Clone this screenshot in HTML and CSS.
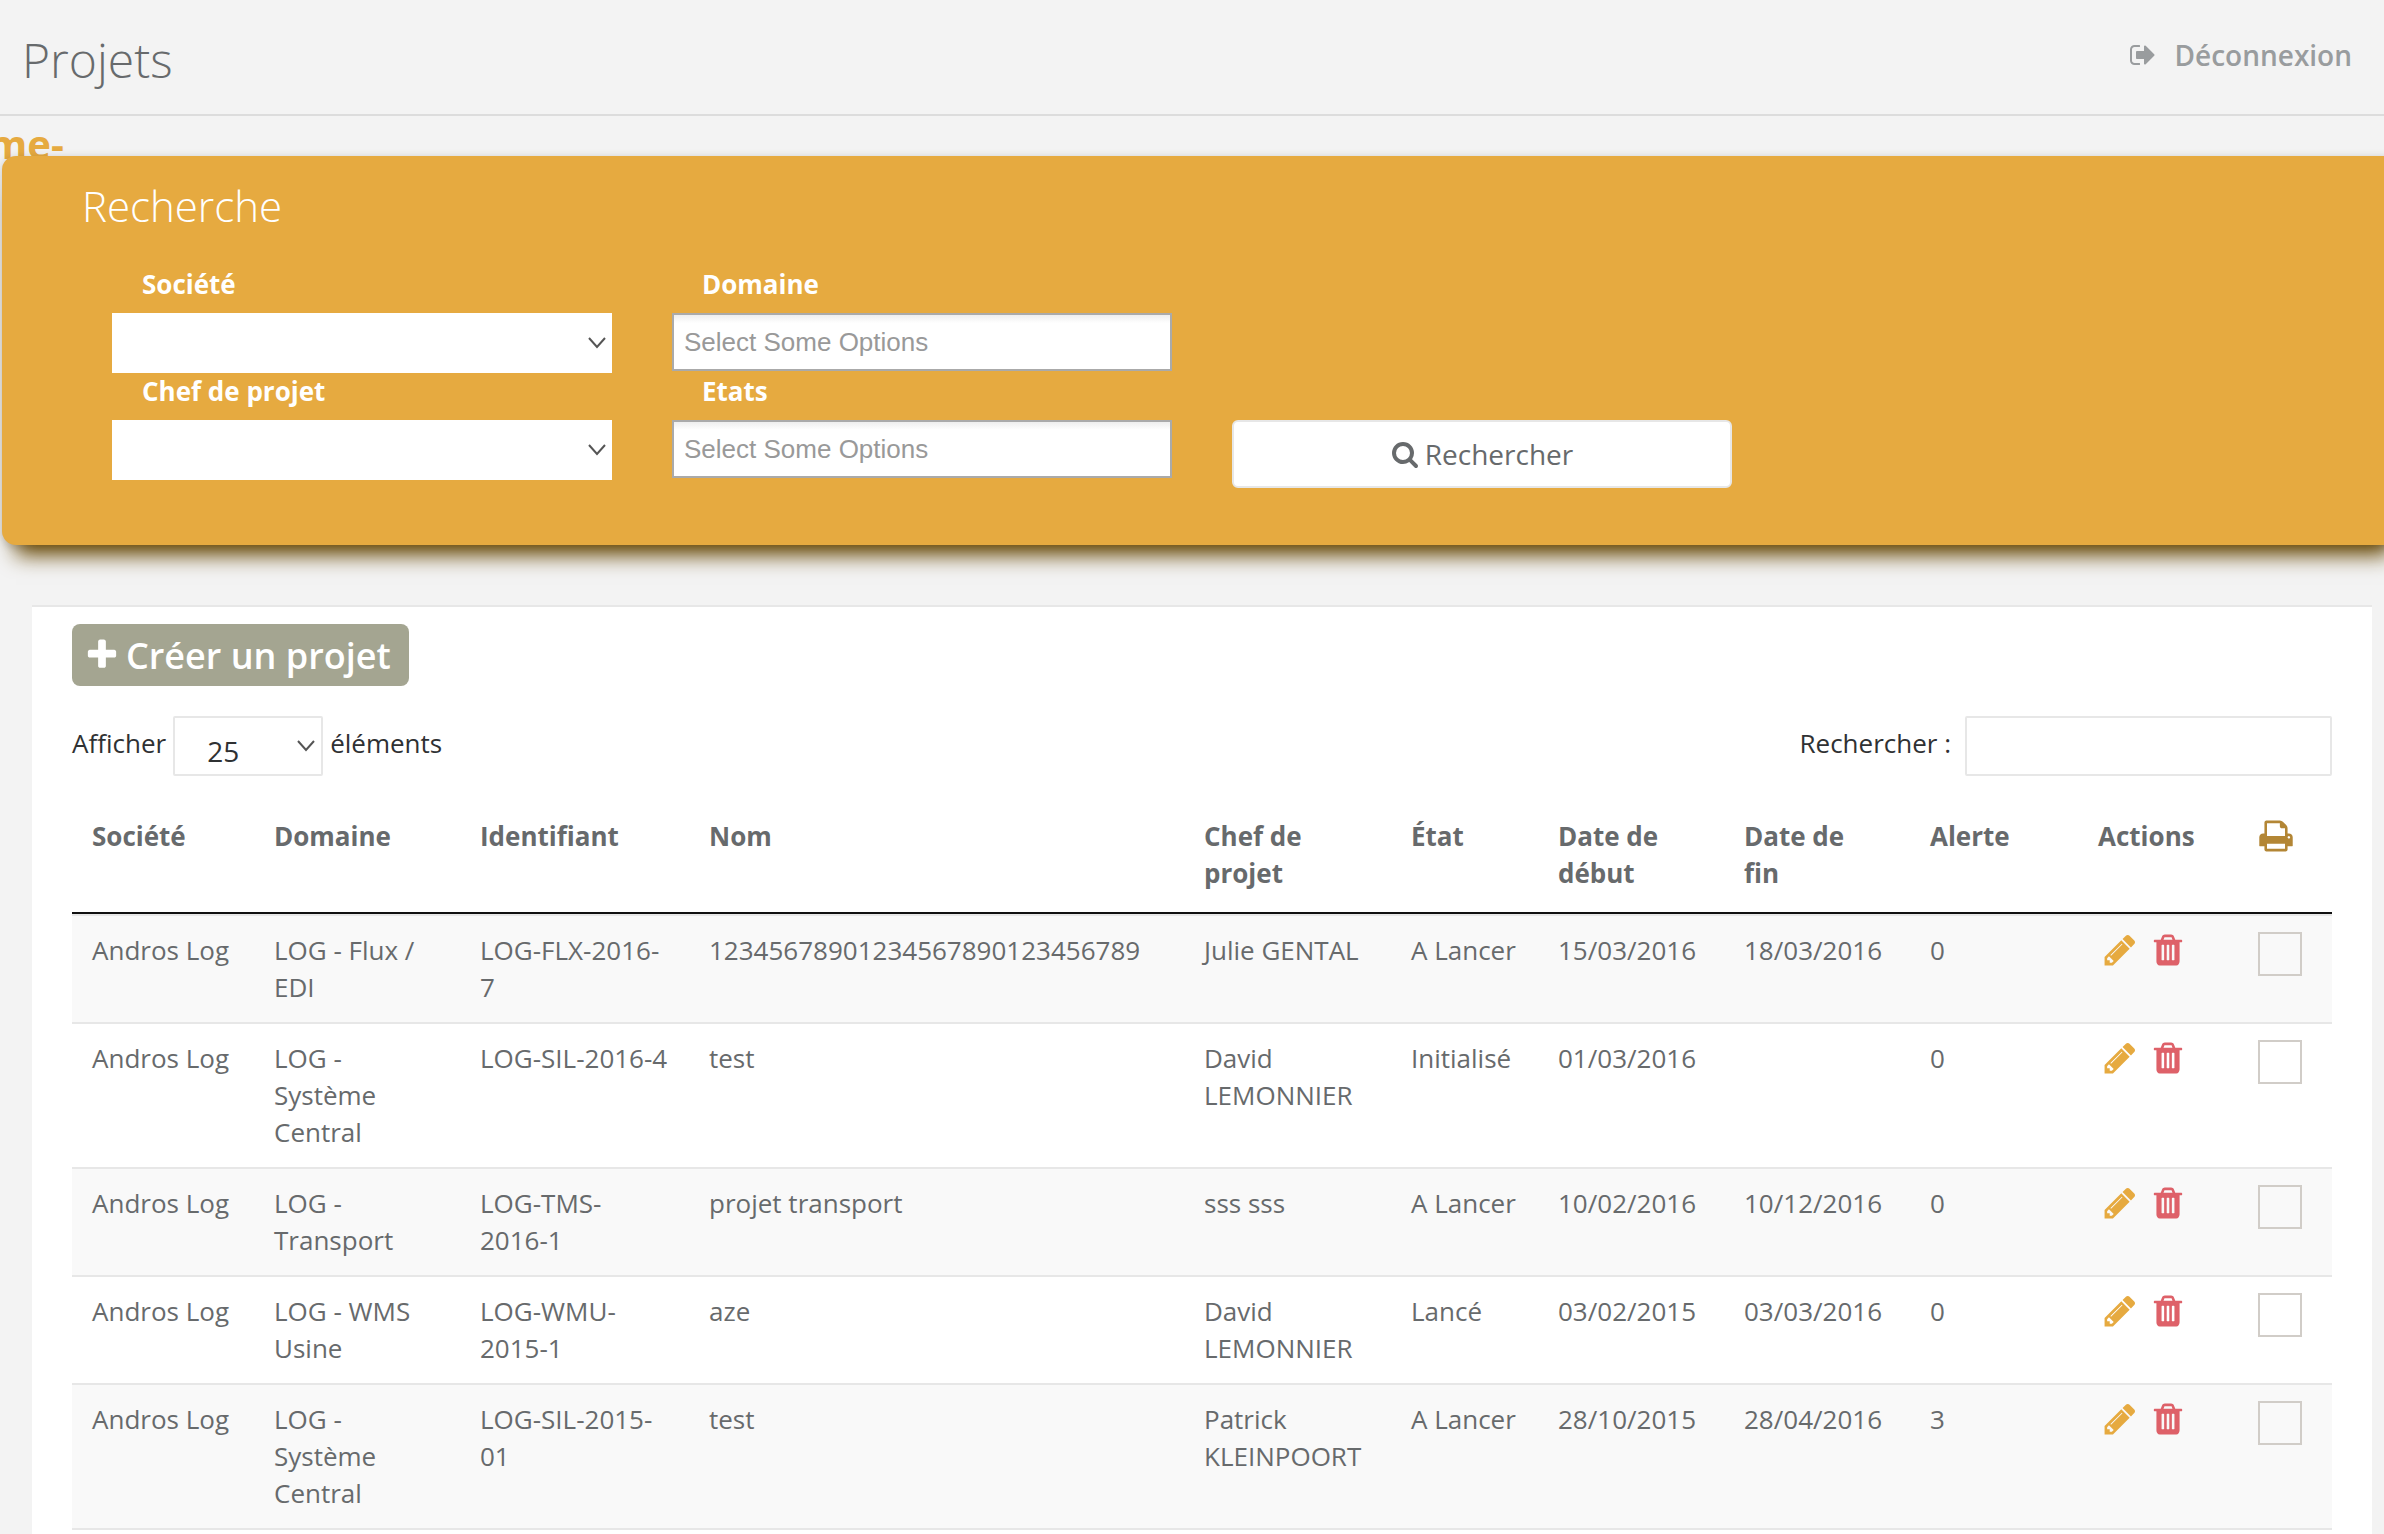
FILE: index.html
```html
<!DOCTYPE html>
<html lang="fr">
<head>
  <meta charset="UTF-8">
  <title>Projets</title>
  <meta name="viewport" content="width=device-width, initial-scale=1.0">
  <link rel="stylesheet" href="styles.css">
</head>
<body>
  <!-- Icônes -->
  <svg class="sprite" aria-hidden="true">
    <symbol id="i-sign-out" viewBox="0 0 1792 1792"><path d="M704 1440q0 4 1 20t.5 26.5-3 23.5-10 19.5-20.5 6.5h-320q-119 0-203.5-84.5t-84.5-203.5v-704q0-119 84.5-203.5t203.5-84.5h320q13 0 22.5 9.5t9.5 22.5q0 4 1 20t.5 26.5-3 23.5-10 19.5-20.5 6.5h-320q-66 0-113 47t-47 113v704q0 66 47 113t113 47h312l11.5 1 11.5 3 8 5.5 7 9 2 13.5zm928-544q0 26-19 45l-544 544q-19 19-45 19t-45-19-19-45v-288h-448q-26 0-45-19t-19-45v-384q0-26 19-45t45-19h448v-288q0-26 19-45t45-19 45 19l544 544q19 19 19 45z"/></symbol>
    <symbol id="i-search" viewBox="0 0 1792 1792"><path d="M1216 832q0-185-131.5-316.5t-316.5-131.5-316.5 131.5-131.5 316.5 131.5 316.5 316.5 131.5 316.5-131.5 131.5-316.5zm512 832q0 52-38 90t-90 38q-54 0-90-38l-343-342q-179 124-399 124-143 0-273.5-55.5t-225-150-150-225-55.5-273.5 55.5-273.5 150-225 225-150 273.5-55.5 273.5 55.5 225 150 150 225 55.5 273.5q0 220-124 399l343 343q37 37 37 90z"/></symbol>
    <symbol id="i-plus" viewBox="0 0 1792 1792"><path d="M1600 736v192q0 40-28 68t-68 28h-416v416q0 40-28 68t-68 28h-192q-40 0-68-28t-28-68v-416h-416q-40 0-68-28t-28-68v-192q0-40 28-68t68-28h416v-416q0-40 28-68t68-28h192q40 0 68 28t28 68v416h416q40 0 68 28t28 68z"/></symbol>
    <symbol id="i-print" viewBox="0 0 1792 1792"><path d="M448 1536h896v-256h-896v256zm0-640h896v-384h-160q-40 0-68-28t-28-68v-160h-640v640zm1152 64q0-26-19-45t-45-19-45 19-19 45 19 45 45 19 45-19 19-45zm128 0v416q0 13-9.5 22.5t-22.5 9.5h-224v160q0 40-28 68t-68 28h-960q-40 0-68-28t-28-68v-160h-224q-13 0-22.5-9.5t-9.5-22.5v-416q0-79 56.5-135.5t135.5-56.5h64v-544q0-40 28-68t68-28h672q40 0 88 20t76 48l152 152q28 28 48 76t20 88v256h64q79 0 135.5 56.5t56.5 135.5z"/></symbol>
    <symbol id="i-pencil" viewBox="0 0 1792 1792"><path d="M491 1536l91-91-235-235-91 91v107h128v128h107zm523-928q0-22-22-22-10 0-17 7l-542 542q-7 7-7 17 0 22 22 22 10 0 17-7l542-542q7-7 7-17zm-54-192l416 416-832 832h-416v-416zm683 96q0 53-37 90l-166 166-416-416 166-165q36-38 90-38 53 0 91 38l235 234q37 39 37 91z"/></symbol>
    <symbol id="i-trash" viewBox="0 0 1792 1792"><path d="M704 1376v-704q0-14-9-23t-23-9h-64q-14 0-23 9t-9 23v704q0 14 9 23t23 9h64q14 0 23-9t9-23zm256 0v-704q0-14-9-23t-23-9h-64q-14 0-23 9t-9 23v704q0 14 9 23t23 9h64q14 0 23-9t9-23zm256 0v-704q0-14-9-23t-23-9h-64q-14 0-23 9t-9 23v704q0 14 9 23t23 9h64q14 0 23-9t9-23zm-544-992h448l-48-117q-7-9-17-11h-317q-10 2-17 11zm928 32v64q0 14-9 23t-23 9h-96v948q0 83-47 143.5t-113 60.5h-832q-66 0-113-58.5t-47-141.5v-952h-96q-14 0-23-9t-9-23v-64q0-14 9-23t23-9h309l70-167q15-37 54-63t79-26h320q40 0 79 26t54 63l70 167h309q14 0 23 9t9 23z"/></symbol>
  </svg>

  <header class="page-header">
    <h1>Projets</h1>
    <a class="logout" href="#"><svg class="icon"><use href="#i-sign-out"/></svg>Déconnexion</a>
  </header>

  <div class="brand">me-</div>

  <section class="search-panel">
    <h2>Recherche</h2>
    <form class="search-form">
      <div class="field">
        <label for="societe">Société</label>
        <select id="societe"><option></option></select>
      </div>
      <div class="field">
        <label for="domaine">Domaine</label>
        <input type="text" id="domaine" placeholder="Select Some Options">
      </div>
      <div class="field new-row">
        <label for="chef">Chef de projet</label>
        <select id="chef"><option></option></select>
      </div>
      <div class="field">
        <label for="etats">Etats</label>
        <input type="text" id="etats" placeholder="Select Some Options">
      </div>
      <button type="button" class="btn-search"><svg class="icon"><use href="#i-search"/></svg>Rechercher</button>
    </form>
  </section>

  <main class="card">
    <a class="btn-create" href="#"><svg class="icon-lg"><use href="#i-plus"/></svg>Créer un projet</a>

    <div class="toolbar">
      <div class="length">
        <label for="length">Afficher</label>
        <select id="length">
          <option>10</option>
          <option selected>25</option>
          <option>50</option>
        </select>
        <span>éléments</span>
      </div>
      <div class="filter">
        <label for="filter">Rechercher :</label>
        <input type="search" id="filter">
      </div>
    </div>

    <table class="projects">
      <colgroup>
        <col class="c-societe">
        <col class="c-domaine">
        <col class="c-ident">
        <col>
        <col class="c-chef">
        <col class="c-etat">
        <col class="c-date">
        <col class="c-date">
        <col class="c-alerte">
        <col class="c-actions">
        <col class="c-print">
      </colgroup>
      <thead>
        <tr>
          <th>Société</th>
          <th>Domaine</th>
          <th>Identifiant</th>
          <th>Nom</th>
          <th>Chef de projet</th>
          <th>État</th>
          <th>Date de début</th>
          <th>Date de fin</th>
          <th>Alerte</th>
          <th>Actions</th>
          <th class="print"><a href="#" aria-label="Imprimer"><svg class="icon-lg"><use href="#i-print"/></svg></a></th>
        </tr>
      </thead>
      <tbody>
        <tr>
          <td>Andros Log</td>
          <td>LOG - Flux / EDI</td>
          <td>LOG-FLX-2016-7</td>
          <td>12345678901234567890123456789</td>
          <td>Julie GENTAL</td>
          <td>A Lancer</td>
          <td>15/03/2016</td>
          <td>18/03/2016</td>
          <td>0</td>
          <td>
            <div class="actions">
              <a class="edit" href="#" aria-label="Modifier"><svg class="icon-lg"><use href="#i-pencil"/></svg></a>
              <a class="delete" href="#" aria-label="Supprimer"><svg class="icon-lg"><use href="#i-trash"/></svg></a>
            </div>
          </td>
          <td><input type="checkbox" aria-label="Imprimer LOG-FLX-2016-7"></td>
        </tr>
        <tr>
          <td>Andros Log</td>
          <td>LOG - Système Central</td>
          <td>LOG-SIL-2016-4</td>
          <td>test</td>
          <td>David LEMONNIER</td>
          <td>Initialisé</td>
          <td>01/03/2016</td>
          <td></td>
          <td>0</td>
          <td>
            <div class="actions">
              <a class="edit" href="#" aria-label="Modifier"><svg class="icon-lg"><use href="#i-pencil"/></svg></a>
              <a class="delete" href="#" aria-label="Supprimer"><svg class="icon-lg"><use href="#i-trash"/></svg></a>
            </div>
          </td>
          <td><input type="checkbox" aria-label="Imprimer LOG-SIL-2016-4"></td>
        </tr>
        <tr>
          <td>Andros Log</td>
          <td>LOG - Transport</td>
          <td>LOG-TMS-2016-1</td>
          <td>projet transport</td>
          <td>sss sss</td>
          <td>A Lancer</td>
          <td>10/02/2016</td>
          <td>10/12/2016</td>
          <td>0</td>
          <td>
            <div class="actions">
              <a class="edit" href="#" aria-label="Modifier"><svg class="icon-lg"><use href="#i-pencil"/></svg></a>
              <a class="delete" href="#" aria-label="Supprimer"><svg class="icon-lg"><use href="#i-trash"/></svg></a>
            </div>
          </td>
          <td><input type="checkbox" aria-label="Imprimer LOG-TMS-2016-1"></td>
        </tr>
        <tr>
          <td>Andros Log</td>
          <td>LOG - WMS Usine</td>
          <td>LOG-WMU-2015-1</td>
          <td>aze</td>
          <td>David LEMONNIER</td>
          <td>Lancé</td>
          <td>03/02/2015</td>
          <td>03/03/2016</td>
          <td>0</td>
          <td>
            <div class="actions">
              <a class="edit" href="#" aria-label="Modifier"><svg class="icon-lg"><use href="#i-pencil"/></svg></a>
              <a class="delete" href="#" aria-label="Supprimer"><svg class="icon-lg"><use href="#i-trash"/></svg></a>
            </div>
          </td>
          <td><input type="checkbox" aria-label="Imprimer LOG-WMU-2015-1"></td>
        </tr>
        <tr>
          <td>Andros Log</td>
          <td>LOG - Système Central</td>
          <td>LOG-SIL-2015-01</td>
          <td>test</td>
          <td>Patrick KLEINPOORT</td>
          <td>A Lancer</td>
          <td>28/10/2015</td>
          <td>28/04/2016</td>
          <td>3</td>
          <td>
            <div class="actions">
              <a class="edit" href="#" aria-label="Modifier"><svg class="icon-lg"><use href="#i-pencil"/></svg></a>
              <a class="delete" href="#" aria-label="Supprimer"><svg class="icon-lg"><use href="#i-trash"/></svg></a>
            </div>
          </td>
          <td><input type="checkbox" aria-label="Imprimer LOG-SIL-2015-01"></td>
        </tr>
      </tbody>
    </table>
  </main>
</body>
</html>
```
FILE: styles.css
```css
:root {
  --orange: #e6aa40;
  --text: #676a6c;
  --dark: #2f3133;
  --line: #e7e7e7;
}

* {
  box-sizing: border-box;
}

body {
  margin: 0;
  min-height: 100vh;
  display: flex;
  flex-direction: column;
  background: #f3f3f3;
  color: var(--text);
  font-family: "Open Sans", sans-serif;
  font-size: 26px;
  line-height: 37px;
  overflow-x: hidden;
}

input,
select,
button {
  font-family: inherit;
  color: inherit;
  margin: 0;
}

.sprite {
  display: none;
}

.icon,
.icon-lg {
  display: block;
  flex: none;
  fill: currentColor;
}

.icon {
  width: 28px;
  height: 28px;
}

.icon-lg {
  width: 36px;
  height: 36px;
}

/* En-tête */
.page-header {
  display: flex;
  justify-content: space-between;
  align-items: flex-start;
  padding: 34px 32px 28px 22px;
  border-bottom: 2px solid #dcdcdc;
}

.page-header h1 {
  margin: 0;
  font-size: 48px;
  font-weight: 300;
  line-height: 52px;
}

.logout {
  display: flex;
  align-items: center;
  gap: 18px;
  color: #999c9e;
  font-size: 28px;
  font-weight: 600;
  line-height: 42px;
  text-decoration: none;
}

.brand {
  height: 40px;
  padding-top: 8px;
  margin-left: -12px;
  color: var(--orange);
  font-size: 40px;
  font-weight: 700;
  line-height: 40px;
}

/* Recherche */
.search-panel {
  position: relative;
  margin: 0 -20px 0 2px;
  padding: 27px 112px 57px 80px;
  background: var(--orange);
  color: #fff;
  border-radius: 14px;
  box-shadow: 0 24px 20px -14px #664600, 0 2px 10px rgba(0, 0, 0, 0.2);
}

.search-panel h2 {
  margin: 0 0 37px;
  font-size: 42px;
  font-weight: 300;
  line-height: 46px;
}

.search-form {
  display: grid;
  grid-template-columns: repeat(4, 1fr);
  column-gap: 60px;
  align-items: start;
  padding-left: 30px;
}

.new-row {
  grid-column-start: 1;
}

.field {
  display: flex;
  flex-direction: column;
  gap: 10px;
}

.field label {
  padding-left: 30px;
  font-weight: 700;
}

select {
  appearance: none;
  height: 60px;
  border: 2px solid var(--line);
  border-radius: 2px;
  background: #fff url("data:image/svg+xml,%3Csvg xmlns='http://www.w3.org/2000/svg' width='18' height='12'%3E%3Cpath d='M1 1l8 9 8-9' fill='none' stroke='%23555' stroke-width='2'/%3E%3C/svg%3E") no-repeat right 6px center;
}

.field select {
  border: 0;
  border-radius: 0;
  color: var(--text);
}

.field input {
  height: 58px;
  padding: 0 10px;
  border: 2px solid #aaa;
  background: linear-gradient(#eee, #fff 15%);
  font-family: "Liberation Sans", sans-serif;
  font-size: 26px;
}

.field input::placeholder {
  color: #999;
}

.btn-search {
  display: flex;
  justify-content: center;
  align-items: center;
  gap: 6px;
  height: 68px;
  margin-top: 47px;
  border: 2px solid var(--line);
  border-radius: 6px;
  background: #fff;
  color: var(--text);
  font-size: 28px;
}

/* Liste */
.card {
  flex: 1;
  margin: 60px 12px 0 32px;
  padding: 17px 40px 0;
  background: #fff;
  border-top: 2px solid var(--line);
}

.btn-create {
  display: inline-flex;
  align-items: center;
  gap: 6px;
  height: 62px;
  padding: 0 18px 0 12px;
  border-radius: 8px;
  background: #a4a591;
  color: #fff;
  font-size: 36px;
  font-weight: 600;
  text-decoration: none;
  vertical-align: top;
}

.toolbar {
  display: flex;
  justify-content: space-between;
  margin: 30px 0 22px;
  color: var(--dark);
  line-height: 54px;
}

.length,
.filter {
  display: flex;
  gap: 7px;
}

.filter {
  gap: 14px;
}

.length select {
  width: 150px;
  padding: 10px 24px 0 32px;
  font-size: 28px;
}

.filter input {
  width: 367px;
  height: 60px;
  border: 2px solid var(--line);
  border-radius: 2px;
  background: #fff;
  font-size: 26px;
}

.projects {
  width: 100%;
  table-layout: fixed;
  border-collapse: separate;
  border-spacing: 0;
  border-bottom: 2px solid var(--line);
}

.c-societe { width: 182px; }
.c-domaine { width: 206px; }
.c-ident { width: 229px; }
.c-chef { width: 207px; }
.c-etat { width: 147px; }
.c-date { width: 186px; }
.c-alerte { width: 168px; }
.c-actions { width: 160px; }
.c-print { width: 94px; }

.projects th {
  padding: 20px 36px 20px 20px;
  border-bottom: 2px solid #111;
  font-weight: 700;
  text-align: left;
  vertical-align: top;
}

.projects td {
  padding: 16px 20px;
  border-top: 2px solid var(--line);
  vertical-align: top;
}

.projects tbody tr:nth-child(odd) {
  background: #f9f9f9;
}

.projects .print {
  padding-right: 0;
}

.print a {
  color: #b38635;
}

.actions {
  display: flex;
  gap: 12px;
  padding-left: 4px;
}

.edit {
  color: var(--orange);
}

.delete {
  color: #de6169;
}

.projects input {
  appearance: none;
  display: block;
  width: 44px;
  height: 44px;
  border: 2px solid #d1cdc8;
}
```
